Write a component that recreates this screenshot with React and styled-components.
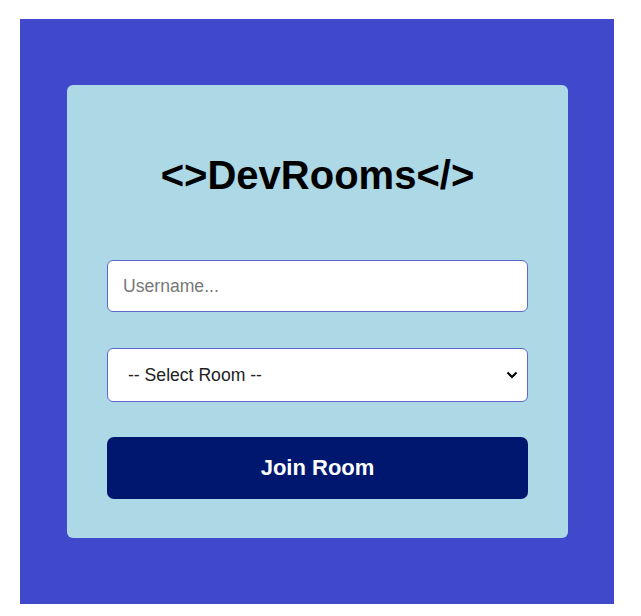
import React from 'react';
import styled, { createGlobalStyle } from 'styled-components';

const GlobalStyle = createGlobalStyle`
	html, body {
		margin: 0;
		padding: 0;
		background: #ffffff;
		font-family: 'Liberation Sans', Arial, sans-serif;
	}
`;

const Page = styled.div`
	width: 641px;
	height: 616px;
	padding: 19px 27px 12px 20px;
	box-sizing: border-box;
`;

const Wrapper = styled.div`
	width: 594px;
	height: 585px;
	box-sizing: border-box;
	padding: 66px 46px 66px 47px;
	background-color: #4048cc;
`;

const Card = styled.div`
	height: 100%;
	box-sizing: border-box;
	display: flex;
	flex-direction: column;
	padding: 67px 40px 0 40px;
	background-color: #add8e6;
	border-radius: 6px;
`;

const Title = styled.h1`
	margin: 0 0 62px;
	text-align: center;
	font-size: 40px;
	line-height: 46px;
	font-weight: 700;
	color: #000;
`;

const Field = styled.input`
	height: 52px;
	box-sizing: border-box;
	padding: 0 15px;
	margin-bottom: 36px;
	font-family: 'Liberation Sans', Arial, sans-serif;
	font-size: 17.6px;
	border: 1px solid #5f67cc;
	border-radius: 6px;
	background: #fff;
	outline: none;

	&::placeholder {
		color: #777;
	}
`;

const Select = styled.select`
	height: 54px;
	box-sizing: border-box;
	padding: 0 12px 0 20px;
	margin-bottom: 35px;
	font-family: 'Liberation Sans', Arial, sans-serif;
	font-size: 17.6px;
	color: #222;
	border: 1px solid #5f67cc;
	border-radius: 6px;
	background: #fff;
	appearance: none;
	background-image: url("data:image/svg+xml,%3Csvg xmlns='http://www.w3.org/2000/svg' width='12' height='8' viewBox='0 0 12 8'%3E%3Cpath d='M1.5 1.5 6 6 10.5 1.5' fill='none' stroke='%23000' stroke-width='2.2'/%3E%3C/svg%3E");
	background-repeat: no-repeat;
	background-position: right 9px center;
	outline: none;
`;

const Button = styled.button`
	height: 62px;
	border: none;
	border-radius: 7px;
	background-color: #00176f;
	color: #fff;
	font-family: 'Liberation Sans', Arial, sans-serif;
	font-size: 22px;
	font-weight: 700;
	cursor: pointer;
`;

const App = () => {
	return (
		<Page>
			<GlobalStyle />
			<Wrapper>
				<Card>
					<Title>&lt;&gt;DevRooms&lt;/&gt;</Title>
					<Field type="text" placeholder="Username..." />
					<Select defaultValue="">
						<option value="">-- Select Room --</option>
						<option value="javascript">JavaScript</option>
						<option value="react">React</option>
					</Select>
					<Button>Join Room</Button>
				</Card>
			</Wrapper>
		</Page>
	);
};

export default App;
